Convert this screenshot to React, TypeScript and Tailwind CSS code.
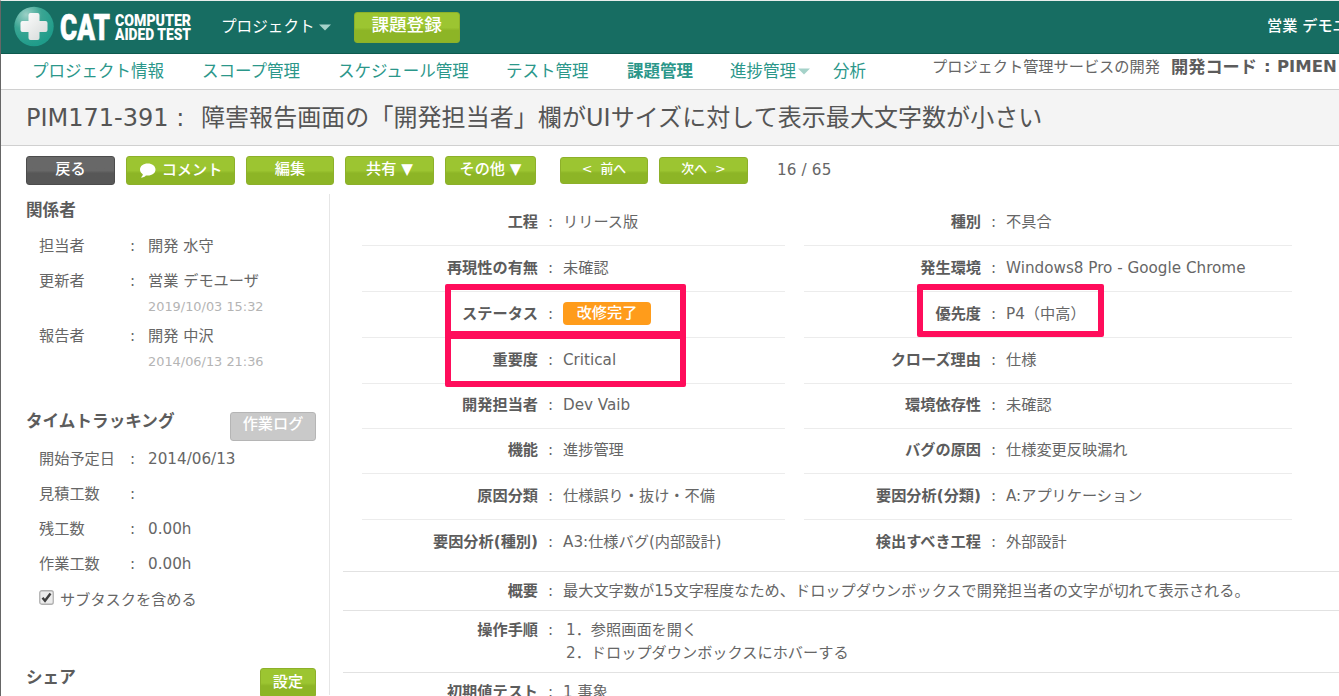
import { ReactNode } from "react";
import clsx from "clsx";

type Field = { label: string; value: ReactNode; height: string };

const navItems = [
  { label: "プロジェクト情報", className: "w-[170px]" },
  { label: "スコープ管理", className: "w-[136px]" },
  { label: "スケジュール管理", className: "w-[168px]" },
  { label: "テスト管理", className: "w-[121px]" },
  { label: "課題管理", className: "w-[103px] font-bold" },
];

const leftFields: Field[] = [
  { label: "工程", value: "リリース版", height: "h-[46px]" },
  { label: "再現性の有無", value: "未確認", height: "h-[46px]" },
  { label: "ステータス", value: <StatusBadge />, height: "h-[46px]" },
  { label: "重要度", value: "Critical", height: "h-[46px]" },
  { label: "開発担当者", value: "Dev Vaib", height: "h-[45px]" },
  { label: "機能", value: "進捗管理", height: "h-[45px]" },
  { label: "原因分類", value: "仕様誤り・抜け・不備", height: "h-[46px]" },
  { label: "要因分析(種別)", value: "A3:仕様バグ(内部設計)", height: "h-[45px]" },
];

const rightFields: Field[] = [
  { label: "種別", value: "不具合", height: "h-[46px]" },
  { label: "発生環境", value: "Windows8 Pro - Google Chrome", height: "h-[46px]" },
  { label: "優先度", value: "P4（中高）", height: "h-[46px]" },
  { label: "クローズ理由", value: "仕様", height: "h-[46px]" },
  { label: "環境依存性", value: "未確認", height: "h-[45px]" },
  { label: "バグの原因", value: "仕様変更反映漏れ", height: "h-[45px]" },
  { label: "要因分析(分類)", value: "A:アプリケーション", height: "h-[46px]" },
  { label: "検出すべき工程", value: "外部設計", height: "h-[45px]" },
];

const buttonTones = {
  green: "border-[#8db02a] from-[#9cc531] to-[#8db526]",
  dark: "border-[#4c4c4c] from-[#686868] to-[#575757]",
  gray: "border-[#b5b5b5] from-[#c9c9c9] to-[#c9c9c9]",
};

function StatusBadge() {
  return (
    <span className="flex h-[23px] w-[88px] items-center justify-center rounded-[4px] bg-[#ff9c1b] pb-px font-medium text-white">
      改修完了
    </span>
  );
}

function Logo() {
  return (
    <svg width="180" height="44" viewBox="0 0 180 44" className="shrink-0">
      <defs>
        <radialGradient id="ball" cx="0.3" cy="0.2" r="0.8">
          <stop offset="0" stopColor="#9bd0c6" />
          <stop offset="0.5" stopColor="#3aa593" />
          <stop offset="1" stopColor="#1f9c8a" />
        </radialGradient>
        <linearGradient id="cross" x1="0" y1="0" x2="1" y2="1">
          <stop offset="0" stopColor="#ffffff" />
          <stop offset="1" stopColor="#d5d9d8" />
        </linearGradient>
      </defs>
      <circle cx="20" cy="21.5" r="19.7" fill="url(#ball)" />
      <path
        d="M16.5 8h7a2 2 0 0 1 2 2v6h6a2 2 0 0 1 2 2v7a2 2 0 0 1-2 2h-6v6a2 2 0 0 1-2 2h-7a2 2 0 0 1-2-2v-6h-6a2 2 0 0 1-2-2v-7a2 2 0 0 1 2-2h6v-6a2 2 0 0 1 2-2z"
        fill="url(#cross)"
      />
      <g fill="#fff" stroke="#fff" fontFamily="Roboto, sans-serif" fontWeight="900">
        <text x="46" y="35" fontSize="37" strokeWidth="0.6" textLength="50" lengthAdjust="spacingAndGlyphs">
          CAT
        </text>
        <text x="101" y="20.5" fontSize="16.6" strokeWidth="0" textLength="76" lengthAdjust="spacingAndGlyphs">
          COMPUTER
        </text>
        <text x="101" y="34.8" fontSize="16.6" strokeWidth="0" textLength="76" lengthAdjust="spacingAndGlyphs">
          AIDED TEST
        </text>
      </g>
    </svg>
  );
}

function Caret({ className }: { className: string }) {
  return (
    <svg width="12" height="7" viewBox="0 0 12 7" className={clsx("shrink-0", className)}>
      <path d="M0 0.5h12L6 6.5z" fill="currentColor" />
    </svg>
  );
}

type ButtonProps = { tone?: keyof typeof buttonTones; className: string; children: ReactNode };

function Button({ tone = "green", className, children }: ButtonProps) {
  return (
    <button
      className={clsx(
        "flex shrink-0 items-center justify-center rounded-[3px] border bg-linear-to-b from-50% to-60% font-medium whitespace-nowrap text-white",
        buttonTones[tone],
        className
      )}
    >
      {children}
    </button>
  );
}

function FieldRow({ field, labelWidth, last }: { field: Field; labelWidth: string; last: boolean }) {
  return (
    <div className={clsx("flex items-center pb-[2px]", field.height, !last && "border-b border-[#ececec]")}>
      <span className={clsx("text-right font-bold text-[#5c5c5c]", labelWidth)}>{field.label}</span>
      <span className="w-[25px] text-center">:</span>
      <span>{field.value}</span>
    </div>
  );
}

function WideRow({ label, className, children }: { label: string; className: string; children: ReactNode }) {
  return (
    <div className={clsx("flex border-t border-[#e2e2e2]", className)}>
      <span className="w-[195px] text-right font-bold text-[#5c5c5c]">{label}</span>
      <span className="w-[25px] text-center">:</span>
      <div>{children}</div>
    </div>
  );
}

function SideRow({ label, value, date }: { label: string; value: string; date?: string }) {
  return (
    <>
      <div className="flex h-[35.3px] items-center pl-[13px]">
        <span className="w-[91px]">{label}</span>
        <span className="w-[18px]">:</span>
        <span>{value}</span>
      </div>
      {date && <div className="h-5 pl-[122px] text-[12.9px] leading-[15px] text-[#b4b4b4]">{date}</div>}
    </>
  );
}

export default function App() {
  return (
    <div className="relative flex h-[696px] w-[1339px] flex-col overflow-hidden border-t border-l border-t-[#e8eeec] border-l-[#666] bg-white font-['DejaVu_Sans','Noto_Sans_CJK_JP',sans-serif] text-[15.2px] leading-[22px] whitespace-nowrap text-[#666]">
      <header className="flex h-[53px] shrink-0 items-center border-b border-[#0d5a4e] bg-[#176d62] pl-[13px] text-white">
        <Logo />
        <span className="ml-[27px] text-[15.6px]">プロジェクト</span>
        <Caret className="ml-[4px] text-[#a5d2c9]" />
        <Button className="ml-[23px] h-[31px] w-[106px] pb-1 text-[17.6px]">課題登録</Button>
        <span className="ml-auto w-[72px] shrink-0 overflow-hidden pb-0.5 font-medium">営業 デモユーザ</span>
      </header>

      <nav className="flex h-[35px] shrink-0 items-center pl-[31px] text-[16.5px] text-[#2b978a]">
        {navItems.map((item) => (
          <span key={item.label} className={clsx("shrink-0", item.className)}>
            {item.label}
          </span>
        ))}
        <span>進捗管理</span>
        <Caret className="ml-[2px] text-[#a5d2c9]" />
        <span className="ml-[23px]">分析</span>
        <div className="ml-auto flex w-[407px] shrink-0 overflow-hidden pb-[9px] text-[#666]">
          <span className="w-[239px] shrink-0 text-[15.2px]">プロジェクト管理サービスの開発</span>
          <b className="flex text-[#5c5c5c]">
            <span className="w-[93px] text-[17.2px]">開発コード</span>
            <span className="w-[13px]">:</span>
            <span>PIMEN</span>
          </b>
        </div>
      </nav>

      <div className="flex h-[57px] shrink-0 items-center border-y-[1.5px] border-[#d0d0d0] bg-[#f4f4f4] pl-[25px] text-[24px] text-[#555]">
        <span className="w-[175px]">PIM171-391 :</span>
        <h1 className="tracking-[0.06px]">障害報告画面の「開発担当者」欄がUIサイズに対して表示最大文字数が小さい</h1>
      </div>

      <div className="flex h-[48px] shrink-0 items-center pl-[25px]">
        <Button tone="dark" className="h-[29px] w-[89px] pb-0.5">
          戻る
        </Button>
        <Button className="ml-[11px] h-[29px] w-[109px] gap-1.5">
          <svg width="17" height="15" viewBox="0 0 17 15" fill="#fff">
            <path d="M8.8 0.5C4.3 0.5 1 3.1 1 6.5c0 2 1.1 3.7 2.8 4.800-.1 1.400-.8 2.400-2 3.200 2.400 0 4-.6 5.100-2 .6.1 1.200.1 1.900.1 4.400 0 7.700-2.700 7.700-6.100S13.200 0.500 8.800 0.500z" />
          </svg>
          コメント
        </Button>
        <Button className="ml-[11px] h-[29px] w-[88px] pb-0.5">編集</Button>
        <Button className="ml-[11px] h-[29px] w-[89px] pb-0.5">共有 ▼</Button>
        <Button className="ml-[11px] h-[29px] w-[91px] pb-0.5">その他 ▼</Button>
        <Button className="ml-[24px] h-[27px] w-[88px] gap-2 pb-0.5 text-[12.8px]">
          <span>&lt;</span>前へ
        </Button>
        <Button className="ml-[11px] h-[27px] w-[89px] gap-2 pb-0.5 text-[12.8px]">
          次へ<span>&gt;</span>
        </Button>
        <span className="ml-[29px] tracking-[0.15px]">16 / 65</span>
      </div>

      <div className="flex grow">
        <aside className="h-[501px] w-[329px] shrink-0 border-r-[1.5px] border-[#e6e6e6] pl-[25px]">
          <h2 className="h-[34px] pt-[6px] text-[16.6px] font-bold text-[#5c5c5c]">関係者</h2>
          <SideRow label="担当者" value="開発 水守" />
          <SideRow label="更新者" value="営業 デモユーザ" date="2019/10/03 15:32" />
          <SideRow label="報告者" value="開発 中沢" date="2014/06/13 21:36" />

          <div className="mt-[38px] flex h-[29px] items-start justify-between pr-[13px]">
            <h2 className="text-[16.6px] leading-[20px] font-bold text-[#5c5c5c]">タイムトラッキング</h2>
            <Button tone="gray" className="h-[29px] w-[86px] pb-1">
              作業ログ
            </Button>
          </div>
          <SideRow label="開始予定日" value="2014/06/13" />
          <SideRow label="見積工数" value="" />
          <SideRow label="残工数" value="0.00h" />
          <SideRow label="作業工数" value="0.00h" />
          <label className="flex h-[35px] items-center pl-[13px]">
            <svg width="15" height="15" viewBox="0 0 15 15" className="mr-[6px] -mt-[5px]">
              <rect x="0.75" y="0.75" width="13.5" height="13.5" rx="2" fill="#ececec" stroke="#b0b0b0" strokeWidth="1.3" />
              <path d="M3.5 7.8L6 10.8L11.5 3.5" fill="none" stroke="#404040" strokeWidth="2.4" />
            </svg>
            サブタスクを含める
          </label>

          <div className="mt-[51px] flex items-start justify-between pr-[13px]">
            <h2 className="-mt-[1px] text-[16.6px] font-bold text-[#5c5c5c]">シェア</h2>
            <Button className="h-[30px] w-[56px] pb-0.5">設定</Button>
          </div>
        </aside>

        <main className="grow pt-[6px]">
          <div className="flex pl-[32px]">
            <section className="w-[423px]">
              {leftFields.map((field, i) => (
                <FieldRow key={field.label} field={field} labelWidth="w-[176px]" last={i === leftFields.length - 1} />
              ))}
            </section>
            <section className="ml-[19px] w-[488px]">
              {rightFields.map((field, i) => (
                <FieldRow key={field.label} field={field} labelWidth="w-[177px]" last={i === rightFields.length - 1} />
              ))}
            </section>
          </div>

          <div className="mt-[6px] ml-[13px]">
            <WideRow label="概要" className="h-[39px] pt-[8px]">
              最大文字数が15文字程度なため、ドロップダウンボックスで開発担当者の文字が切れて表示される。
            </WideRow>
            <WideRow label="操作手順" className="h-[62px] pt-[8px]">
              <ol className="pl-[3px] leading-[23px]">
                <li>1．参照画面を開く</li>
                <li>2．ドロップダウンボックスにホバーする</li>
              </ol>
            </WideRow>
            <WideRow label="初期値テスト" className="h-[40px] pt-[8px]">
              1 事象
            </WideRow>
          </div>
        </main>
      </div>

      {/* highlight frames over status, severity and priority */}
      <div className="absolute top-[283px] left-[444px] h-[53px] w-[241px] rounded-[2px] border-[6px] border-[#ff0d5b]" />
      <div className="absolute top-[332px] left-[444px] h-[54px] w-[241px] rounded-[2px] border-[6px] border-[#ff0d5b]" />
      <div className="absolute top-[283px] left-[916px] h-[53px] w-[187px] rounded-[2px] border-[6px] border-[#ff0d5b]" />
    </div>
  );
}
